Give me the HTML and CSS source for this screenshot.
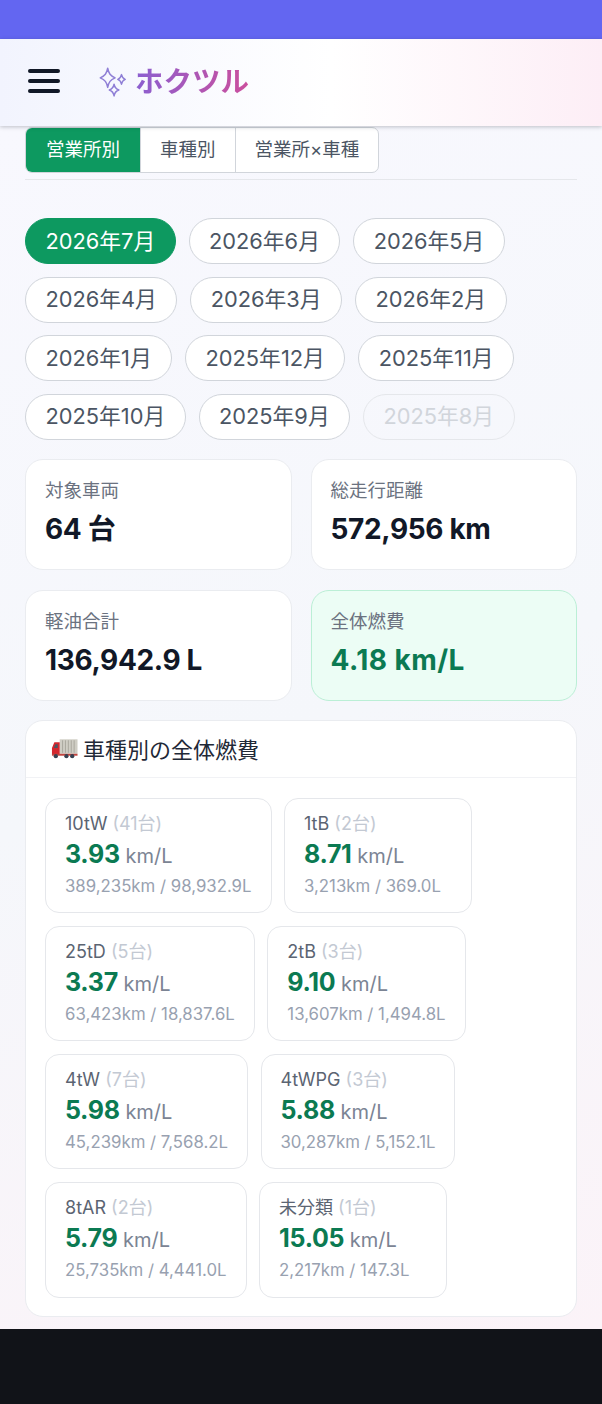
FILE: index.html
```html
<!DOCTYPE html>
<html lang="ja">
<head>
  <meta charset="utf-8">
  <title>ホクツル</title>
  <link rel="stylesheet" href="styles.css">
</head>
<body>
  <div class="status-bar"></div>
  <header class="app-header">
    <div class="menu-btn"><span></span><span></span><span></span></div>
    <svg class="sparkle" width="34" height="34" viewBox="0 0 32 32" fill="none" stroke="#8f7fd6" stroke-width="1.4" stroke-linejoin="round">
      <path d="M11 4 C12 9 13.500 11 18 13 C13.500 15 12 17 11 22 C10 17 8.500 15 4 13 C8.500 11 10 9 11 4 Z"/>
      <path d="M24 10 C24.500 12.500 25 13.500 27.500 14.500 C25 15.500 24.500 16.500 24 19 C23.500 16.500 23 15.500 20.500 14.500 C23 13.500 23.500 12.500 24 10 Z"/>
      <path d="M17 19 C17.500 22 18.500 23.500 21.500 24.500 C18.500 25.500 17.500 27 17 30 C16.500 27 15.500 25.500 12.500 24.500 C15.500 23.500 16.500 22 17 19 Z"/>
    </svg>
    <span class="logo-text">ホクツル</span>
  </header>

  <main class="content">
    <div class="tabs">
      <button class="tab active">営業所別</button>
      <button class="tab">車種別</button>
      <button class="tab">営業所×車種</button>
    </div>
    <div class="divider"></div>

    <div class="months">
      <button class="chip active">2026年7月</button>
      <button class="chip">2026年6月</button>
      <button class="chip">2026年5月</button>
      <button class="chip">2026年4月</button>
      <button class="chip">2026年3月</button>
      <button class="chip">2026年2月</button>
      <button class="chip">2026年1月</button>
      <button class="chip">2025年12月</button>
      <button class="chip">2025年11月</button>
      <button class="chip">2025年10月</button>
      <button class="chip">2025年9月</button>
      <button class="chip disabled">2025年8月</button>
    </div>

    <div class="stats">
      <div class="stat">
        <div class="stat-label">対象車両</div>
        <div class="stat-value">64 台</div>
      </div>
      <div class="stat">
        <div class="stat-label">総走行距離</div>
        <div class="stat-value">572,956 km</div>
      </div>
      <div class="stat">
        <div class="stat-label">軽油合計</div>
        <div class="stat-value">136,942.9 L</div>
      </div>
      <div class="stat green">
        <div class="stat-label">全体燃費</div>
        <div class="stat-value">4.18 km/L</div>
      </div>
    </div>

    <section class="panel">
      <div class="panel-head">
        <svg class="truck" width="27" height="24" viewBox="0 0 28 24">
          <rect x="9" y="3" width="18.500" height="15" fill="#cfcdc4"/>
          <path d="M12 4v13M15 4v13M18 4v13M21 4v13M24 4v13" stroke="#a9a79d" stroke-width="1"/>
          <path d="M8 6 H3.500 L1 12 V19 H9 V6 Z" fill="#d3272e"/>
          <path d="M4.500 8 H7 V12 H3 Z" fill="#4b5563"/>
          <rect x="1" y="18" width="26.500" height="2" fill="#c2453f"/>
          <circle cx="5" cy="20.500" r="2.200" fill="#374151"/>
          <circle cx="16" cy="20.500" r="2.200" fill="#374151"/>
          <circle cx="22" cy="20.500" r="2.200" fill="#374151"/>
        </svg>
        <h2>車種別の全体燃費</h2>
      </div>
      <div class="panel-body">
        <div class="type-card">
          <div class="type-name">10tW <span>(41台)</span></div>
          <div class="type-value"><b>3.93</b> km/L</div>
          <div class="type-sub">389,235km / 98,932.9L</div>
        </div>
        <div class="type-card">
          <div class="type-name">1tB <span>(2台)</span></div>
          <div class="type-value"><b>8.71</b> km/L</div>
          <div class="type-sub">3,213km / 369.0L</div>
        </div>
        <div class="type-card">
          <div class="type-name">25tD <span>(5台)</span></div>
          <div class="type-value"><b>3.37</b> km/L</div>
          <div class="type-sub">63,423km / 18,837.6L</div>
        </div>
        <div class="type-card">
          <div class="type-name">2tB <span>(3台)</span></div>
          <div class="type-value"><b>9.10</b> km/L</div>
          <div class="type-sub">13,607km / 1,494.8L</div>
        </div>
        <div class="type-card">
          <div class="type-name">4tW <span>(7台)</span></div>
          <div class="type-value"><b>5.98</b> km/L</div>
          <div class="type-sub">45,239km / 7,568.2L</div>
        </div>
        <div class="type-card">
          <div class="type-name">4tWPG <span>(3台)</span></div>
          <div class="type-value"><b>5.88</b> km/L</div>
          <div class="type-sub">30,287km / 5,152.1L</div>
        </div>
        <div class="type-card">
          <div class="type-name">8tAR <span>(2台)</span></div>
          <div class="type-value"><b>5.79</b> km/L</div>
          <div class="type-sub">25,735km / 4,441.0L</div>
        </div>
        <div class="type-card">
          <div class="type-name">未分類 <span>(1台)</span></div>
          <div class="type-value"><b>15.05</b> km/L</div>
          <div class="type-sub">2,217km / 147.3L</div>
        </div>
      </div>
    </section>
  </main>

  <div class="nav-bar"></div>
</body>
</html>
```

FILE: styles.css
```css
* {
  box-sizing: border-box;
}

body {
  margin: 0;
  font-family: Inter, "Noto Sans CJK JP", sans-serif;
  color: #111827;
  background-color: #111318;
}

.status-bar {
  height: 39px;
  background-color: #6366f1;
}

.app-header {
  height: 87px;
  display: flex;
  align-items: center;
  padding: 0 0 3px 28px;
  background: linear-gradient(90deg, #f2f4fe 0%, #ffffff 55%, #fdeef6 100%);
  box-shadow: 0 1px 4px rgba(17, 24, 39, 0.25);
  position: relative;
}

.menu-btn {
  width: 32px;
  display: flex;
  flex-direction: column;
  gap: 6.500px;
  margin-right: 36px;
}

.menu-btn span {
  height: 3.500px;
  border-radius: 2px;
  background-color: #111827;
}

.sparkle {
  margin-right: 5px;
}

.logo-text {
  margin-bottom: 4px;
  font-size: 28.500px;
  font-weight: 700;
  background: linear-gradient(90deg, #8b5fd0, #cb4f9d);
  -webkit-background-clip: text;
  background-clip: text;
  color: transparent;
}

.content {
  height: 1203px;
  padding: 1px 25px 0;
  background: linear-gradient(160deg, #f8f8fe 0%, #f5f7fb 50%, #fbf3f8 100%);
}

.tabs {
  display: inline-flex;
  height: 46px;
  background-color: #fff;
  border: 1px solid #d1d5db;
  border-radius: 7px;
  overflow: hidden;
  vertical-align: top;
}

.tab {
  padding: 0 19px 4px;
  border: 0;
  border-left: 1px solid #d1d5db;
  background: none;
  font: inherit;
  font-size: 18.500px;
  color: #4b5563;
}

.tab:first-child {
  border-left: 0;
  padding: 0 20px 4px;
}

.tab.active {
  background-color: #0d9960;
  color: #fff;
}

.divider {
  margin-top: 6px;
  height: 1px;
  background-color: #e5e7eb;
}

.months {
  display: flex;
  flex-wrap: wrap;
  gap: 12.500px 13px;
  margin-top: 38px;
}

.chip {
  height: 46px;
  padding: 0 19.400px 4px;
  border: 1px solid #d1d5db;
  border-radius: 23px;
  background-color: #fff;
  font: inherit;
  font-size: 21.800px;
  color: #4b5563;
}

.chip.active {
  background-color: #0d9960;
  border-color: #0d9960;
  color: #fff;
}

.chip.disabled {
  border-color: #e5e7eb;
  background-color: transparent;
  color: #d1d5db;
}

.stats {
  display: grid;
  grid-template-columns: 1fr 1fr;
  gap: 20.500px 19px;
  margin-top: 19.500px;
}

.stat {
  height: 110.500px;
  padding: 18px 19px;
  background-color: #fff;
  border: 1px solid #eaecf0;
  border-radius: 18px;
}

.stat.green {
  background-color: #ecfdf5;
  border-color: #bbefd6;
}

.stat-label {
  font-size: 18.500px;
  line-height: 24px;
  color: #6b7280;
}

.stat-value {
  margin-top: 9px;
  font-size: 28px;
  line-height: 36px;
  font-weight: 700;
  letter-spacing: -0.350px;
}

.green .stat-value {
  color: #0b7a52;
  letter-spacing: 0.450px;
}

.panel {
  margin-top: 19.500px;
  background-color: #fff;
  border: 1px solid #eaecf0;
  border-radius: 18px;
  height: 597px;
}

.panel-head {
  height: 57px;
  display: flex;
  align-items: center;
  gap: 5px;
  padding: 0 0 2px 25px;
  border-bottom: 1px solid #f1f2f5;
}

.panel-head h2 {
  margin: 0;
  font-size: 22px;
  font-weight: 400;
  color: #1f2937;
}

.panel-body {
  display: flex;
  flex-wrap: wrap;
  gap: 12.700px 12.500px;
  padding: 19.500px 19px 0;
}

.type-card {
  height: 115.500px;
  min-width: 187.500px;
  padding: 12px 19px 0;
  background-color: #fff;
  border: 1px solid #e5e7eb;
  border-radius: 14px;
}

.type-name {
  font-size: 18px;
  line-height: 26px;
  color: #5b6472;
}

.type-name span {
  color: #c3c9d3;
}

.type-value {
  font-size: 20px;
  line-height: 34px;
  color: #7b8494;
}

.type-value b {
  font-size: 25px;
  font-weight: 700;
  letter-spacing: -0.300px;
  color: #0b7a52;
}

.type-sub {
  font-size: 16.800px;
  line-height: 27px;
  color: #98a1b0;
  white-space: nowrap;
}

.nav-bar {
  height: 75px;
  background-color: #111318;
}
```
